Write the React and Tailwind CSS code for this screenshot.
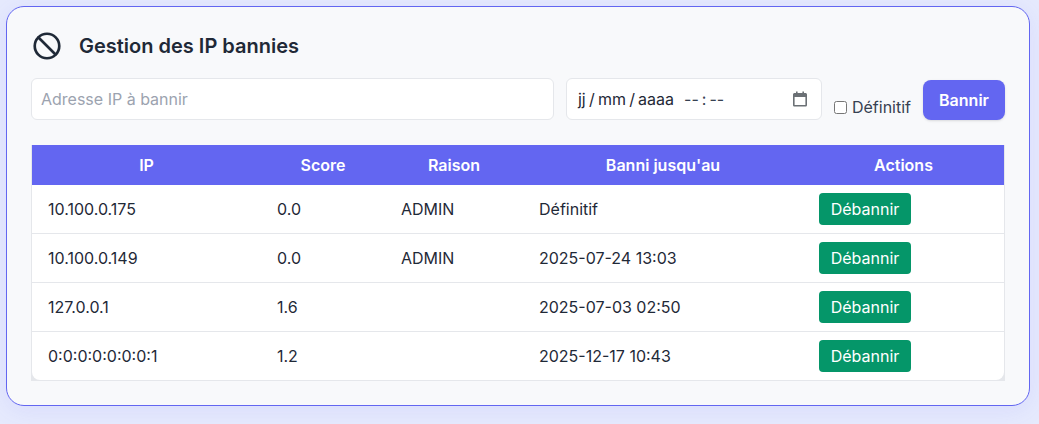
import React from 'react';

const BANS = [
    { ip: '10.100.0.175', score: '0.0', reason: 'ADMIN', until: 'Définitif' },
    { ip: '10.100.0.149', score: '0.0', reason: 'ADMIN', until: '2025-07-24 13:03' },
    { ip: '127.0.0.1', score: '1.6', reason: '', until: '2025-07-03 02:50' },
    { ip: '0:0:0:0:0:0:0:1', score: '1.2', reason: '', until: '2025-12-17 10:43' },
];

const BanIcon = () => (
    <svg width="32" height="32" viewBox="0 0 24 24" fill="none" stroke="#1f2937" strokeWidth="2" strokeLinecap="round" strokeLinejoin="round">
        <circle cx="12" cy="12" r="9.2" />
        <path d="M5.6 5.6l12.8 12.8" />
    </svg>
);

const CalendarIcon = () => (
    <svg width="16" height="16" viewBox="0 0 16 16" fill="#6b7075">
        <path d="M4 0.5h1.6V2h4.8V0.5H12V2h1.4C14.3 2 15 2.7 15 3.6v10.3c0 .9-.7 1.6-1.6 1.6H2.6c-.9 0-1.6-.7-1.6-1.6V3.6C1 2.7 1.7 2 2.6 2H4V0.5zM2.6 6v7.9h10.8V6H2.6z" />
    </svg>
);

export default function App() {
    return (
        <div className="h-[424px] w-[1039px] overflow-hidden bg-[#e6eafd] p-[6px] font-['Inter',sans-serif] text-[#1f2937]">
            <div className="h-[400px] w-[1024px] rounded-[18px] border border-[#6366f1] bg-[#f8f9fb] px-6 pt-[23px] shadow-[0_4px_24px_rgba(99,102,241,0.1)]">
                {/* Title */}
                <div className="flex h-[32px] items-center gap-[16px]">
                    <BanIcon />
                    <h2 className="text-[20px] leading-[28px] font-semibold">Gestion des IP bannies</h2>
                </div>

                {/* Form */}
                <div className="mt-[16px] flex items-end gap-3">
                    <input
                        placeholder="Adresse IP à bannir"
                        className="h-[42px] w-[523px] rounded-md border border-[#e5e7eb] bg-white px-[9px] text-[16px] outline-none placeholder:text-[#9ca3af]"
                    />
                    <div className="flex h-[42px] w-[256px] items-center justify-between rounded-md border border-[#e5e7eb] bg-white pl-[11px] pr-[13px] text-[16px] text-[#1f2937]">
                        <span className="flex items-center">
                            <span className="[word-spacing:-1.3px]">jj / mm / aaaa</span>
                            <span className="ml-[10px] text-[#374151] [word-spacing:-1.5px]">-- : --</span>
                        </span>
                        <CalendarIcon />
                    </div>
                    <label className="mb-[1px] flex items-center gap-[5px] text-[16px] text-[#374151]">
                        <input type="checkbox" className="h-[13px] w-[13px]" />
                        Définitif
                    </label>
                    <button className="h-[40px] w-[82px] rounded-lg bg-[#6366f1] text-[16px] font-semibold text-white shadow-sm">
                        Bannir
                    </button>
                </div>

                {/* Table */}
                <div className="mt-[25px] w-[974px] border border-t-0 border-[#e5e7eb] bg-[#e5e7eb]">
                    <div className="overflow-hidden rounded-b-lg bg-white">
                        <table className="w-full table-fixed border-separate border-spacing-0 text-[16px]">
                            <colgroup>
                                <col className="w-[229px]" />
                                <col className="w-[124px]" />
                                <col className="w-[138px]" />
                                <col className="w-[280px]" />
                                <col />
                            </colgroup>
                            <thead>
                                <tr className="h-[40px] bg-[#6366f1] text-white">
                                    <th className="font-semibold">IP</th>
                                    <th className="font-semibold">Score</th>
                                    <th className="font-semibold">Raison</th>
                                    <th className="font-semibold">Banni jusqu'au</th>
                                    <th className="font-semibold">Actions</th>
                                </tr>
                            </thead>
                            <tbody>
                                {BANS.map((ban, i) => {
                                    const last = i === BANS.length - 1;
                                    const cell = last ? 'h-[48px] px-4' : 'h-[49px] border-b border-[#e5e7eb] px-4';
                                    return (
                                        <tr key={ban.ip}>
                                            <td className={cell}>{ban.ip}</td>
                                            <td className={cell}>{ban.score}</td>
                                            <td className={cell}>{ban.reason}</td>
                                            <td className={cell}>{ban.until}</td>
                                            <td className={cell}>
                                                <button className="block h-[32px] w-[92px] rounded bg-[#059669] text-[16px] text-white">Débannir</button>
                                            </td>
                                        </tr>
                                    );
                                })}
                            </tbody>
                        </table>
                    </div>
                </div>
            </div>
        </div>
    );
}
